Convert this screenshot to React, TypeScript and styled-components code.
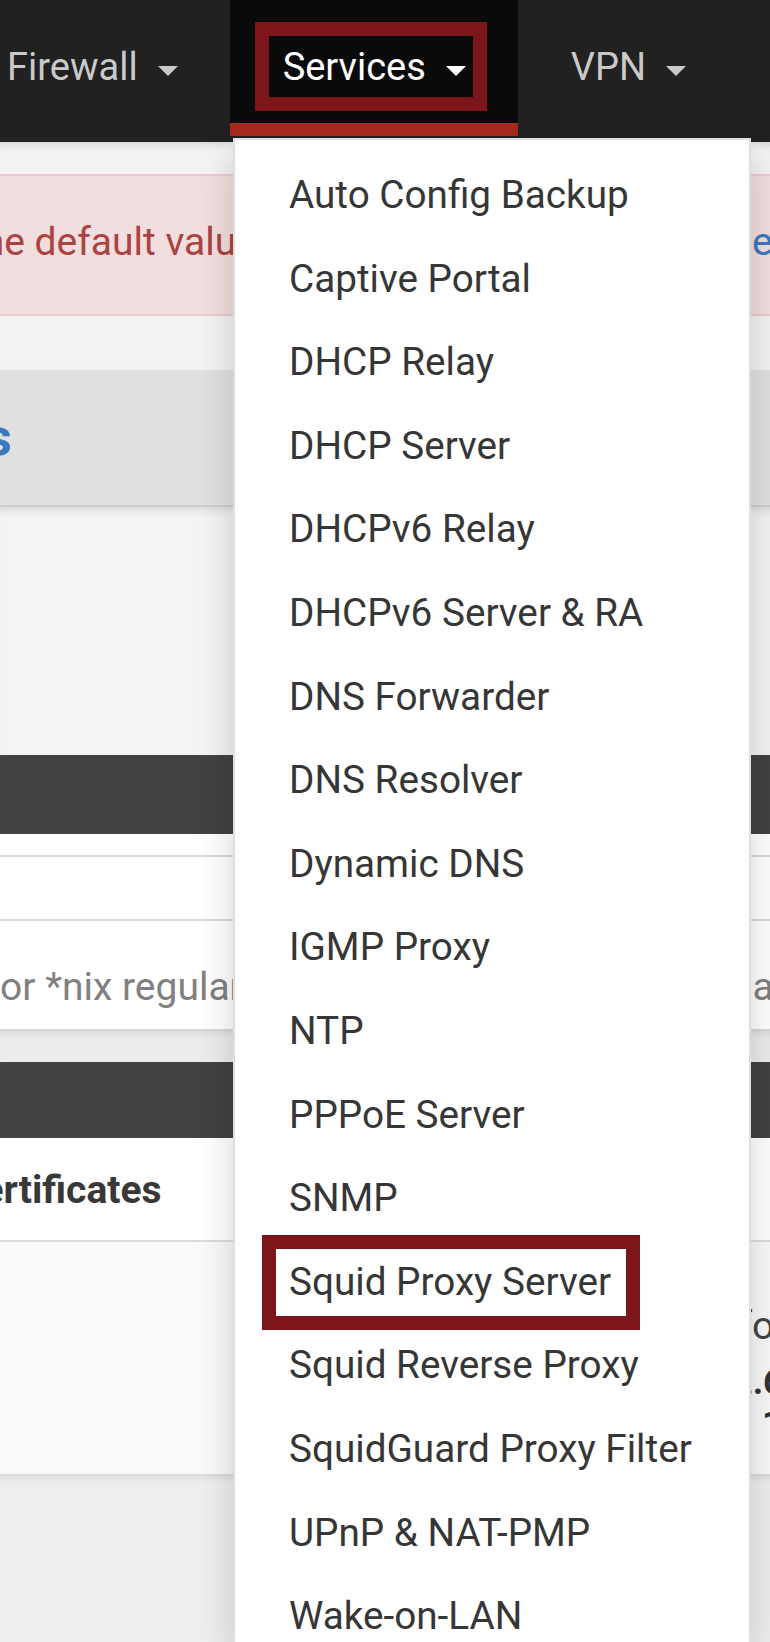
import React from "react";
import styled, { createGlobalStyle } from "styled-components";

const Global = createGlobalStyle`
  html, body { margin: 0; padding: 0; }
  body {
    width: 770px;
    height: 1642px;
    overflow: hidden;
    background: #f3f3f3;
    font-family: Roboto, "Noto Sans", "Liberation Sans", sans-serif;
  }
  #root { width: 770px; height: 1642px; overflow: hidden; }
`;

const Page = styled.div`
  position: relative;
  width: 770px;
  height: 1642px;
  overflow: hidden;
  background: #f3f3f3;
`;

/* ---------- top navigation ---------- */
const NavBar = styled.nav`
  height: 142px;
  background: #212121;
  display: flex;
  align-items: flex-start;
  overflow: hidden;
`;

const NavList = styled.ul`
  display: flex;
  margin: 0 0 0 -46px;
  padding: 0;
  list-style: none;
`;

const NavItem = styled.li<{ $active?: boolean }>`
  position: relative;
  height: 136px;
  box-sizing: border-box;
  padding: 48px 52px 0 53px;
  font-size: 38px;
  line-height: 38px;
  white-space: nowrap;
  color: ${(p) => (p.$active ? "#ffffff" : "#c9c9c9")};
  background: ${(p) => (p.$active ? "#0a0a0a" : "transparent")};
  box-shadow: ${(p) => (p.$active ? "inset 0 -13px 0 #a7291f" : "none")};
`;

const Caret = styled.span`
  display: inline-block;
  width: 0;
  height: 0;
  margin-left: 20px;
  vertical-align: 4px;
  border-top: 10px solid currentColor;
  border-left: 10px solid transparent;
  border-right: 10px solid transparent;
`;

const Highlight = styled.span<{ $top: number; $left: number; $w: number; $h: number }>`
  position: absolute;
  top: ${(p) => p.$top}px;
  left: ${(p) => p.$left}px;
  width: ${(p) => p.$w}px;
  height: ${(p) => p.$h}px;
  box-sizing: border-box;
  border: 14px solid #7c161b;
  pointer-events: none;
`;

/* ---------- page content behind the menu ---------- */
const Gap = styled.div<{ $h: number; $bg?: string; $shadow?: boolean }>`
  height: ${(p) => p.$h}px;
  background: ${(p) => p.$bg ?? "#f3f3f3"};
  box-shadow: ${(p) => (p.$shadow ? "inset 0 9px 10px -7px rgba(0,0,0,0.14)" : "none")};
`;

const Row = styled.div<{ $h: number; $bg: string; $pad?: number; $line?: boolean }>`
  height: ${(p) => p.$h}px;
  box-sizing: border-box;
  display: flex;
  justify-content: space-between;
  align-items: flex-start;
  padding-top: ${(p) => p.$pad ?? 0}px;
  background: ${(p) => p.$bg};
  border-bottom: ${(p) => (p.$line ? "2px solid #dcdcdc" : "none")};
`;

const AlertBox = styled(Row)`
  border-top: 2px solid #ebccd1;
  border-bottom: 2px solid #ebccd1;
  color: #a94442;
`;

const LeftCell = styled.div`
  width: 233px;
  overflow: hidden;
  white-space: nowrap;
`;

const RightCell = styled.div`
  width: 18px;
  white-space: nowrap;
  display: flex;
  flex-direction: column;
`;

const Text = styled.span<{ $shift?: number; $color?: string; $bold?: boolean; $size?: number }>`
  display: block;
  margin-left: ${(p) => -(p.$shift ?? 0)}px;
  font-size: ${(p) => p.$size ?? 39}px;
  line-height: 46px;
  font-weight: ${(p) => (p.$bold ? 700 : 400)};
  color: ${(p) => p.$color ?? "inherit"};
`;

const Crumb = styled.div`
  width: 12px;
  display: flex;
  justify-content: flex-end;
  white-space: nowrap;
  font-size: 52px;
  line-height: 61px;
  font-weight: 700;
  color: #3a78c0;
`;

const Breadcrumb = styled.div`
  height: 137px;
  box-sizing: border-box;
  padding-top: 37px;
  background: #e0e0e0;
  border-bottom: 2px solid #cfcfcf;
`;

const DarkBar = styled.div<{ $h: number }>`
  height: ${(p) => p.$h}px;
  background: #424242;
`;

const StackLine = styled.div<{ $h: number }>`
  height: ${(p) => p.$h}px;
`;

/* ---------- dropdown ---------- */
const Dropdown = styled.ul`
  position: absolute;
  top: 138px;
  left: 233px;
  width: 518px;
  height: 1504px;
  box-sizing: border-box;
  margin: 0;
  padding: 13px 0 0;
  list-style: none;
  background: #ffffff;
  border: 2px solid rgba(0, 0, 0, 0.13);
  border-bottom: none;
  box-shadow: 0 17px 34px rgba(0, 0, 0, 0.18);
`;

const MenuItem = styled.li`
  position: relative;
  padding-left: 54px;
  font-size: 38.7px;
  line-height: 83.6px;
  color: #363636;
  white-space: nowrap;
`;

const services = [
  "Auto Config Backup",
  "Captive Portal",
  "DHCP Relay",
  "DHCP Server",
  "DHCPv6 Relay",
  "DHCPv6 Server & RA",
  "DNS Forwarder",
  "DNS Resolver",
  "Dynamic DNS",
  "IGMP Proxy",
  "NTP",
  "PPPoE Server",
  "SNMP",
  "Squid Proxy Server",
  "Squid Reverse Proxy",
  "SquidGuard Proxy Filter",
  "UPnP & NAT-PMP",
  "Wake-on-LAN",
];

export default function App() {
  return (
    <Page>
      <Global />
      <NavBar>
        <NavList>
          <NavItem>
            Firewall<Caret />
          </NavItem>
          <NavItem $active>
            Services<Caret />
            <Highlight $top={22} $left={25} $w={232} $h={89} />
          </NavItem>
          <NavItem>
            VPN<Caret />
          </NavItem>
        </NavList>
      </NavBar>

      <Gap $h={32} $shadow />
      <AlertBox $h={142} $bg="#f2dede" $pad={43}>
        <LeftCell>
          <Text $shift={30}>the default values will be used</Text>
        </LeftCell>
        <RightCell>
          <Text $shift={21.5} $color="#3a78c0">here</Text>
        </RightCell>
      </AlertBox>
      <Gap $h={54} />
      <Breadcrumb>
        <Crumb>Services</Crumb>
      </Breadcrumb>
      <Gap $h={248} $bg="#f4f4f4" $shadow />
      <DarkBar $h={79} />
      <Row $h={23} $bg="#ffffff" $line />
      <Row $h={64} $bg="#ffffff" $line />
      <Row $h={108} $bg="#ffffff" $pad={43}>
        <LeftCell>
          <Text $color="#808080">or *nix regular expressions</Text>
        </LeftCell>
        <RightCell>
          <Text $shift={82.6} $color="#808080">format</Text>
        </RightCell>
      </Row>
      <Gap $h={33} $bg="#ececec" $shadow />
      <DarkBar $h={76} />
      <Row $h={104} $bg="#ffffff" $pad={29} $line>
        <LeftCell>
          <Text $shift={43} $bold $color="#383838">Certificates</Text>
        </LeftCell>
      </Row>
      <Row $h={232} $bg="#f9f9f9" $pad={61}>
        <LeftCell />
        <RightCell>
          <StackLine $h={56}>
            <Text $shift={45.6} $color="#444">Info</Text>
          </StackLine>
          <StackLine $h={42}>
            <Text $shift={20} $bold $size={36} $color="#333">2.6</Text>
          </StackLine>
          <StackLine $h={46}>
            <Text $shift={-10} $bold $size={36} $color="#333">1</Text>
          </StackLine>
        </RightCell>
      </Row>
      <Gap $h={168} $bg="#efefef" $shadow />

      <Dropdown>
        {services.map((s) => (
          <MenuItem key={s}>
            {s}
            {s === "Squid Proxy Server" && (
              <Highlight $top={-5} $left={27} $w={378} $h={95} />
            )}
          </MenuItem>
        ))}
      </Dropdown>
    </Page>
  );
}
